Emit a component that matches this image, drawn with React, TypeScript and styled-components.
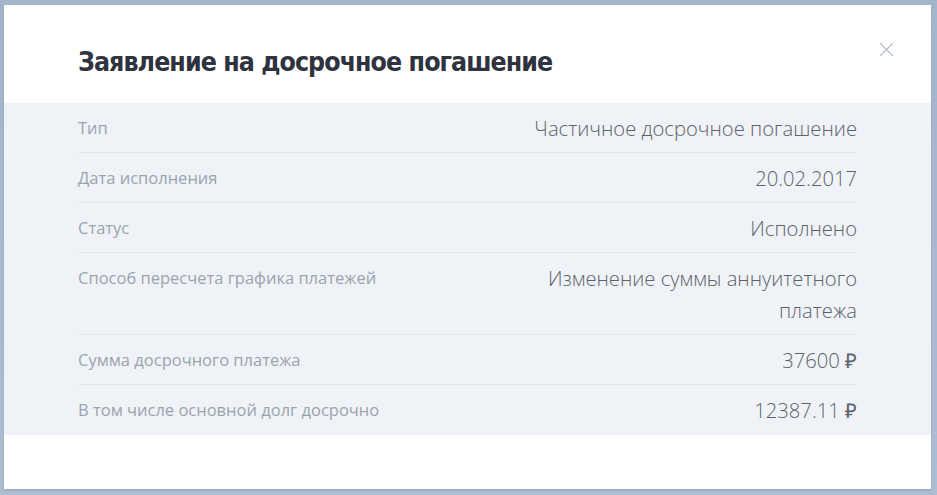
import React from "react";
import styled, { createGlobalStyle } from "styled-components";

const Global = createGlobalStyle`
  html, body { margin: 0; padding: 0; }
  body {
    background: #aab9ce;
    width: 937px;
    height: 495px;
    overflow: hidden;
  }
`;

const Backdrop = styled.div`
  box-sizing: border-box;
  width: 937px;
  height: 495px;
  padding: 5px 6px 6px 4px;
  background: linear-gradient(180deg, #a4b4ca 0%, #aebdd1 100%);
`;

const Modal = styled.div`
  height: 100%;
  background: #ffffff;
  display: flex;
  flex-direction: column;
  box-shadow: 0 1px 2px rgba(60, 80, 110, 0.25);
`;

const Header = styled.div`
  position: relative;
  height: 98px;
  box-sizing: border-box;
  padding: 39px 74px 0 74px;
`;

const Title = styled.h1`
  margin: 0;
  font-family: "DejaVu Sans Condensed", "DejaVu Sans", sans-serif;
  font-stretch: condensed;
  font-weight: 700;
  font-size: 26.5px;
  line-height: 36px;
  letter-spacing: -0.95px;
  color: #2f3340;
`;

const Close = styled.button`
  position: absolute;
  top: 31px;
  right: 32px;
  width: 26px;
  height: 26px;
  padding: 0;
  border: 0;
  background: transparent;
  display: flex;
  align-items: center;
  justify-content: center;
  cursor: pointer;
`;

const Body = styled.div`
  background: #eff3f7;
  padding: 0 74px 0 74px;
`;

const Row = styled.div<{ $last?: boolean }>`
  display: grid;
  grid-template-columns: 1fr 360px;
  column-gap: 20px;
  padding: 9px 0 8px;
  border-bottom: 1px solid ${(p) => (p.$last ? "transparent" : "#e1e6ec")};
`;

const Label = styled.div`
  font-family: "Open Sans", sans-serif;
  font-size: 16.5px;
  line-height: 32px;
  color: #9ba3ae;
`;

const Value = styled.div`
  font-family: "Open Sans", sans-serif;
  font-weight: 300;
  font-size: 20.2px;
  line-height: 32px;
  color: #5d626a;
  text-align: right;
`;

const Footer = styled.div`
  flex: 1;
`;

const rows: [string, string][] = [
  ["Тип", "Частичное досрочное погашение"],
  ["Дата исполнения", "20.02.2017"],
  ["Статус", "Исполнено"],
  ["Способ пересчета графика платежей", "Изменение суммы аннуитетного платежа"],
  ["Сумма досрочного платежа", "37600 ₽"],
  ["В том числе основной долг досрочно", "12387.11 ₽"],
];

export default function App() {
  return (
    <>
      <Global />
      <Backdrop>
        <Modal>
          <Header>
            <Title>Заявление на досрочное погашение</Title>
            <Close aria-label="Закрыть">
              <svg width="15" height="15" viewBox="0 0 15 15">
                <path d="M1 1L14 14M14 1L1 14" stroke="#b6bdc7" strokeWidth="1.2" fill="none" />
              </svg>
            </Close>
          </Header>
          <Body>
            {rows.map(([l, v], i) => (
              <Row key={l} $last={i === rows.length - 1}>
                <Label>{l}</Label>
                <Value>{v}</Value>
              </Row>
            ))}
          </Body>
          <Footer />
        </Modal>
      </Backdrop>
    </>
  );
}
